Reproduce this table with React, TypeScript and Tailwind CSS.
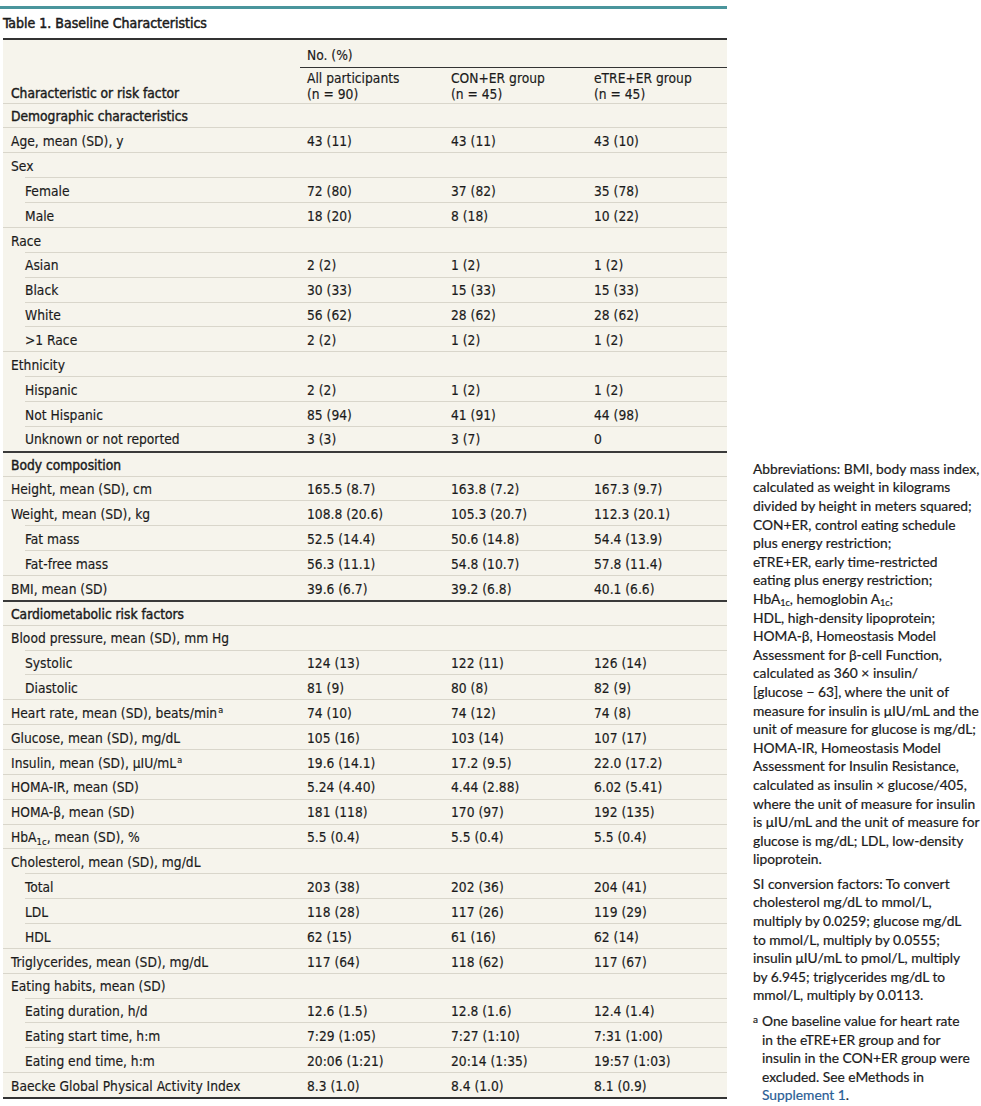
import React from "react";

type Row = {
  label: React.ReactNode;
  v?: [string, string, string];
  sub?: boolean;
  section?: boolean;
  dark?: boolean;
};

const sup = (t: string) => <sup className="text-[9px] ml-[1px]">{t}</sup>;

const rows: Row[] = [
  { label: "Demographic characteristics", section: true },
  { label: "Age, mean (SD), y", v: ["43 (11)", "43 (11)", "43 (10)"] },
  { label: "Sex" },
  { label: "Female", sub: true, v: ["72 (80)", "37 (82)", "35 (78)"] },
  { label: "Male", sub: true, v: ["18 (20)", "8 (18)", "10 (22)"] },
  { label: "Race" },
  { label: "Asian", sub: true, v: ["2 (2)", "1 (2)", "1 (2)"] },
  { label: "Black", sub: true, v: ["30 (33)", "15 (33)", "15 (33)"] },
  { label: "White", sub: true, v: ["56 (62)", "28 (62)", "28 (62)"] },
  { label: ">1 Race", sub: true, v: ["2 (2)", "1 (2)", "1 (2)"] },
  { label: "Ethnicity" },
  { label: "Hispanic", sub: true, v: ["2 (2)", "1 (2)", "1 (2)"] },
  { label: "Not Hispanic", sub: true, v: ["85 (94)", "41 (91)", "44 (98)"] },
  { label: "Unknown or not reported", sub: true, v: ["3 (3)", "3 (7)", "0"] },
  { label: "Body composition", section: true, dark: true },
  { label: "Height, mean (SD), cm", v: ["165.5 (8.7)", "163.8 (7.2)", "167.3 (9.7)"] },
  { label: "Weight, mean (SD), kg", v: ["108.8 (20.6)", "105.3 (20.7)", "112.3 (20.1)"] },
  { label: "Fat mass", sub: true, v: ["52.5 (14.4)", "50.6 (14.8)", "54.4 (13.9)"] },
  { label: "Fat-free mass", sub: true, v: ["56.3 (11.1)", "54.8 (10.7)", "57.8 (11.4)"] },
  { label: "BMI, mean (SD)", v: ["39.6 (6.7)", "39.2 (6.8)", "40.1 (6.6)"] },
  { label: "Cardiometabolic risk factors", section: true, dark: true },
  { label: "Blood pressure, mean (SD), mm Hg" },
  { label: "Systolic", sub: true, v: ["124 (13)", "122 (11)", "126 (14)"] },
  { label: "Diastolic", sub: true, v: ["81 (9)", "80 (8)", "82 (9)"] },
  { label: <>Heart rate, mean (SD), beats/min{sup("a")}</>, v: ["74 (10)", "74 (12)", "74 (8)"] },
  { label: "Glucose, mean (SD), mg/dL", v: ["105 (16)", "103 (14)", "107 (17)"] },
  { label: <>Insulin, mean (SD), μIU/mL{sup("a")}</>, v: ["19.6 (14.1)", "17.2 (9.5)", "22.0 (17.2)"] },
  { label: "HOMA-IR, mean (SD)", v: ["5.24 (4.40)", "4.44 (2.88)", "6.02 (5.41)"] },
  { label: "HOMA-β, mean (SD)", v: ["181 (118)", "170 (97)", "192 (135)"] },
  {
    label: (
      <>
        HbA<sub className="text-[9.5px]">1c</sub>, mean (SD), %
      </>
    ),
    v: ["5.5 (0.4)", "5.5 (0.4)", "5.5 (0.4)"],
  },
  { label: "Cholesterol, mean (SD), mg/dL" },
  { label: "Total", sub: true, v: ["203 (38)", "202 (36)", "204 (41)"] },
  { label: "LDL", sub: true, v: ["118 (28)", "117 (26)", "119 (29)"] },
  { label: "HDL", sub: true, v: ["62 (15)", "61 (16)", "62 (14)"] },
  { label: "Triglycerides, mean (SD), mg/dL", v: ["117 (64)", "118 (62)", "117 (67)"] },
  { label: "Eating habits, mean (SD)" },
  { label: "Eating duration, h/d", sub: true, v: ["12.6 (1.5)", "12.8 (1.6)", "12.4 (1.4)"] },
  { label: "Eating start time, h:m", sub: true, v: ["7:29 (1:05)", "7:27 (1:10)", "7:31 (1:00)"] },
  { label: "Eating end time, h:m", sub: true, v: ["20:06 (1:21)", "20:14 (1:35)", "19:57 (1:03)"] },
  { label: "Baecke Global Physical Activity Index", v: ["8.3 (1.0)", "8.4 (1.0)", "8.1 (0.9)"] },
];

function TableRow({ r }: { r: Row }) {
  const border = r.dark ? "border-t-2 border-[#3a3a3a]" : "border-t border-[#d9d6cb]";
  const firstBorder = r.dark ? "border-t-2 border-[#3a3a3a]" : r.sub ? "" : "border-t border-[#d9d6cb]";
  return (
    <div className="flex h-[24.87px]">
      <div className={`w-[297px] shrink-0 ${firstBorder} ${r.sub ? "pl-[22px]" : ""}`}>
        <div
          className={`h-full flex items-center pt-[2px] ${r.sub ? "border-t border-[#d9d6cb]" : "pl-[8px]"} ${
            r.section ? "[-webkit-text-stroke:0.4px_#1b1b1b]" : ""
          }`}
        >
          <span>{r.label}</span>
        </div>
      </div>
      {[0, 1, 2].map((i) => (
        <div
          key={i}
          className={`${border} ${i === 0 ? "w-[144px]" : i === 1 ? "w-[143px]" : "flex-1"} pl-[7px] flex items-center pt-[2px]`}
        >
          {r.v ? r.v[i] : ""}
        </div>
      ))}
    </div>
  );
}

const notes1 = [
  "Abbreviations: BMI, body mass index,",
  "calculated as weight in kilograms",
  "divided by height in meters squared;",
  "CON+ER, control eating schedule",
  "plus energy restriction;",
  "eTRE+ER, early time-restricted",
  "eating plus energy restriction;",
  "__HBA__",
  "HDL, high-density lipoprotein;",
  "HOMA-β, Homeostasis Model",
  "Assessment for β-cell Function,",
  "calculated as 360 × insulin/",
  "[glucose − 63], where the unit of",
  "measure for insulin is μIU/mL and the",
  "unit of measure for glucose is mg/dL;",
  "HOMA-IR, Homeostasis Model",
  "Assessment for Insulin Resistance,",
  "calculated as insulin × glucose/405,",
  "where the unit of measure for insulin",
  "is μIU/mL and the unit of measure for",
  "glucose is mg/dL; LDL, low-density",
  "lipoprotein.",
];

const notes2 = [
  "SI conversion factors: To convert",
  "cholesterol mg/dL to mmol/L,",
  "multiply by 0.0259; glucose mg/dL",
  "to mmol/L, multiply by 0.0555;",
  "insulin μIU/mL to pmol/L, multiply",
  "by 6.945; triglycerides mg/dL to",
  "mmol/L, multiply by 0.0113.",
];

const notes3 = [
  "One baseline value for heart rate",
  "in the eTRE+ER group and for",
  "insulin in the CON+ER group were",
  "excluded. See eMethods in",
];

export default function App() {
  const narrow = { fontFamily: '"DejaVu Sans Condensed", "DejaVu Sans", sans-serif', fontStretch: "condensed" };
  return (
    <div className="w-[981px] h-[1106px] bg-white text-[#1b1b1b] flex items-end overflow-hidden">
      <div className="w-[727px] shrink-0 mb-[7px]" style={narrow}>
        <div className="h-[3px] bg-[#4a959c] mt-[5px]" />
        <div className="h-[29px] pl-[3px] flex items-center text-[14px] pt-[1px] [-webkit-text-stroke:0.5px_#1b1b1b]">
          Table 1. Baseline Characteristics
        </div>
        <div className="ml-[3px] bg-[#f6f4ec] border-t-2 border-b-2 border-[#333] text-[13.7px] [-webkit-text-stroke:0.15px_#1b1b1b]">
          <div className="flex">
            <div className="w-[297px] shrink-0 flex items-end pl-[8px] pb-[2px] leading-[16px] [-webkit-text-stroke:0.4px_#1b1b1b]">
              Characteristic or risk factor
            </div>
            <div className="flex-1">
              <div className="h-[28px] border-b-[1.5px] border-[#333] pl-[7px] flex items-center pt-[5px]">
                No. (%)
              </div>
              <div className="flex h-[35px] leading-[16px] pt-[2px]">
                <div className="w-[144px] pl-[7px]">
                  All participants
                  <br />
                  (n = 90)
                </div>
                <div className="w-[143px] pl-[7px]">
                  CON+ER group
                  <br />
                  (n = 45)
                </div>
                <div className="flex-1 pl-[7px]">
                  eTRE+ER group
                  <br />
                  (n = 45)
                </div>
              </div>
            </div>
          </div>
          {rows.map((r, i) => (
            <TableRow key={i} r={r} />
          ))}
        </div>
      </div>
      <div
        className="ml-[26px] text-[13.8px] leading-[18.6px] whitespace-nowrap text-[#1b1b1b] pb-[1px] [-webkit-text-stroke:0.2px_#1b1b1b]"
        style={{ fontFamily: 'Lato, "Liberation Sans", sans-serif' }}
      >
        <div>
          {notes1.map((l, i) =>
            l === "__HBA__" ? (
              <div key={i}>
                HbA<sub className="text-[9px]">1c</sub>, hemoglobin A<sub className="text-[9px]">1c</sub>;
              </div>
            ) : (
              <div key={i}>{l}</div>
            )
          )}
        </div>
        <div className="mt-[6px]">
          {notes2.map((l, i) => (
            <div key={i}>{l}</div>
          ))}
        </div>
        <div className="mt-[7px] flex">
          <span className="w-[9px] shrink-0 text-[10px] leading-[14px]">a</span>
          <div>
            {notes3.map((l, i) => (
              <div key={i}>{l}</div>
            ))}
            <div>
              <span className="text-[#2a5d95] [-webkit-text-stroke:0.2px_#2a5d95]">Supplement 1</span>.
            </div>
          </div>
        </div>
      </div>
    </div>
  );
}
